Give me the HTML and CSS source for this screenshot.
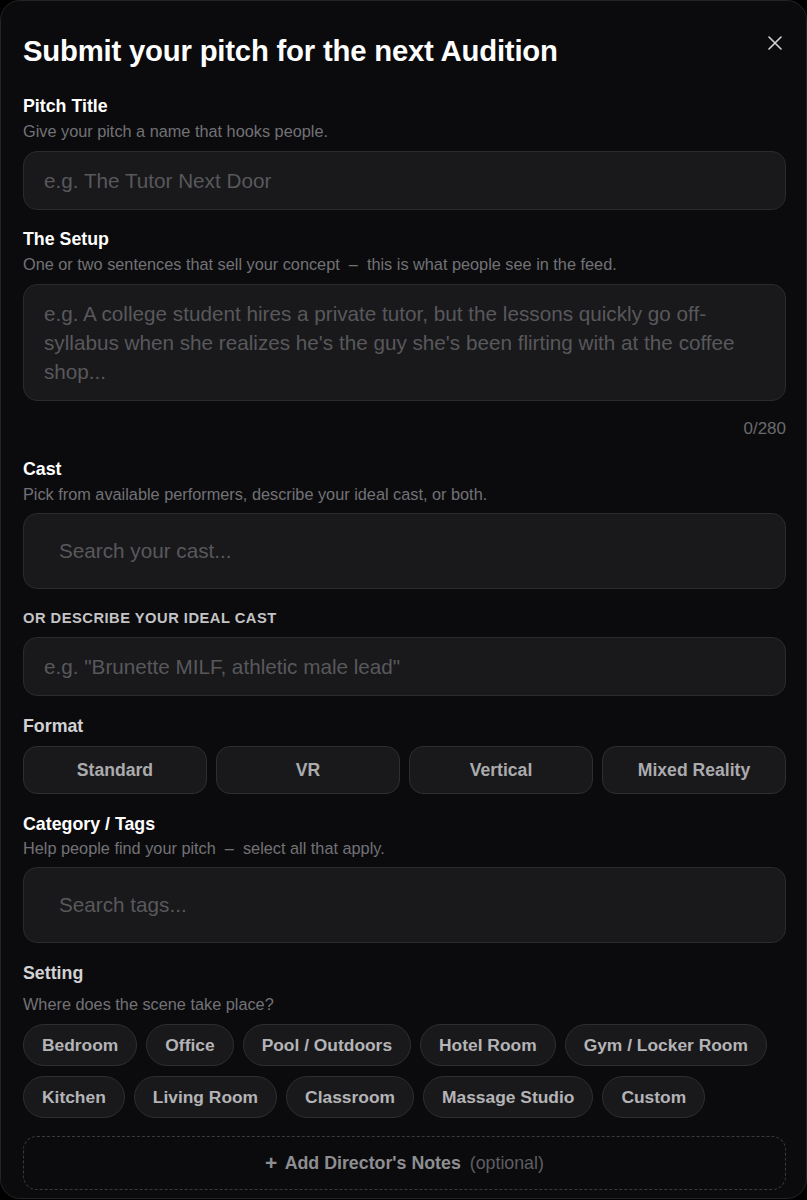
FILE: index.html
```html
<!DOCTYPE html>
<html lang="en">
<head>
<meta charset="utf-8">
<title>Submit your pitch</title>
<link rel="stylesheet" href="styles.css">
</head>
<body>
<div class="modal">
  <div class="header">
    <h1 class="title">Submit your pitch for the next Audition</h1>
    <button class="close" aria-label="Close">
      <svg width="14" height="14" viewBox="0 0 14 14"><path d="M1 1L13 13M13 1L1 13" stroke="#d4d4d4" stroke-width="1.6" stroke-linecap="round"/></svg>
    </button>
  </div>

  <section class="field f-title">
    <div class="label">Pitch Title</div>
    <div class="help">Give your pitch a name that hooks people.</div>
    <div class="input">e.g. The Tutor Next Door</div>
  </section>

  <section class="field f-setup">
    <div class="label">The Setup</div>
    <div class="help">One or two sentences that sell your concept&nbsp; –&nbsp; this is what people see in the feed.</div>
    <div class="input textarea">e.g. A college student hires a private tutor, but the lessons quickly go off-syllabus when she realizes he's the guy she's been flirting with at the coffee shop...</div>
    <div class="count">0/280</div>
  </section>

  <section class="field f-cast">
    <div class="label">Cast</div>
    <div class="help">Pick from available performers, describe your ideal cast, or both.</div>
    <div class="input search">Search your cast...</div>
    <div class="caps">OR DESCRIBE YOUR IDEAL CAST</div>
    <div class="input">e.g. "Brunette MILF, athletic male lead"</div>
  </section>

  <section class="field f-format">
    <div class="label dim">Format</div>
    <div class="formats">
      <div class="fbtn">Standard</div>
      <div class="fbtn">VR</div>
      <div class="fbtn">Vertical</div>
      <div class="fbtn">Mixed Reality</div>
    </div>
  </section>

  <section class="field f-tags">
    <div class="label">Category / Tags</div>
    <div class="help">Help people find your pitch&nbsp; –&nbsp; select all that apply.</div>
    <div class="input search">Search tags...</div>
  </section>

  <section class="field f-setting">
    <div class="label dim">Setting</div>
    <div class="help help-gap">Where does the scene take place?</div>
    <div class="chips">
      <div class="chip">Bedroom</div>
      <div class="chip">Office</div>
      <div class="chip">Pool / Outdoors</div>
      <div class="chip">Hotel Room</div>
      <div class="chip">Gym / Locker Room</div>
      <div class="chip">Kitchen</div>
      <div class="chip">Living Room</div>
      <div class="chip">Classroom</div>
      <div class="chip">Massage Studio</div>
      <div class="chip">Custom</div>
    </div>
  </section>

  <div class="notes"><span class="plus">+</span> Add Director's Notes <span class="opt">(optional)</span></div>
</div>
</body>
</html>
```

FILE: styles.css
```css
* { box-sizing: border-box; }
html, body {
  margin: 0;
  padding: 0;
  background: #000;
  font-family: "Liberation Sans", Arial, sans-serif;
  color: #fff;
}
.modal {
  width: 807px;
  min-height: 1199px;
  background: #0b0b0d;
  border: 1px solid #242426;
  border-radius: 20px;
  padding: 0 20px 0 22px;
  overflow: hidden;
}
.header {
  display: flex;
  justify-content: space-between;
  align-items: flex-start;
  padding-top: 31px;
}
.title {
  margin: 0;
  font-size: 29.3px;
  font-weight: 700;
  line-height: 38px;
  letter-spacing: -0.2px;
  color: #fff;
}
.close {
  background: none;
  border: 0;
  padding: 0;
  margin: 4px 4px 0 0;
  width: 14px;
  height: 14px;
  display: flex;
}
.field { display: flex; flex-direction: column; }
.label {
  font-size: 17.8px;
  font-weight: 700;
  line-height: 20px;
  color: #fff;
}
.label.dim { color: #d2d2d4; }
.help {
  font-size: 16.3px;
  line-height: 20px;
  color: #727276;
  margin-top: 5px;
}
.help-gap { margin-top: 11px; }
.input {
  margin-top: 10px;
  height: 59px;
  background: #19191b;
  border: 1px solid #2b2b2e;
  border-radius: 14px;
  padding: 0 20px;
  display: flex;
  align-items: center;
  font-size: 20.7px;
  color: #58585c;
}
.input.textarea {
  height: 117px;
  align-items: flex-start;
  padding-top: 14px;
  line-height: 29px;
  padding-right: 24px;
}
.input.search {
  height: 76px;
  padding-left: 35px;
}
.f-title { margin-top: 26px; }
.f-setup { margin-top: 19px; }
.f-setup .input { margin-top: 10px; }
.count {
  text-align: right;
  font-size: 17px;
  color: #6a6a6e;
  margin-top: 18px;
  line-height: 20px;
}
.f-cast { margin-top: 20px; }
.f-cast .help + .input { margin-top: 9px; }
.caps {
  margin-top: 19px;
  font-size: 14.7px;
  font-weight: 700;
  letter-spacing: 0.5px;
  line-height: 20px;
  color: #c4c4c6;
}
.f-cast .caps + .input { margin-top: 9px; }
.f-format { margin-top: 20px; }
.formats {
  margin-top: 10px;
  display: grid;
  grid-template-columns: repeat(4, 1fr);
  gap: 9px;
}
.fbtn {
  height: 48px;
  background: #19191b;
  border: 1px solid #2e2e31;
  border-radius: 14px;
  display: flex;
  align-items: center;
  justify-content: center;
  font-size: 17.6px;
  font-weight: 700;
  color: #ababae;
}
.f-tags { margin-top: 20px; }
.f-tags .help { margin-top: 4px; }
.f-tags .input { margin-top: 9px; }
.f-setting { margin-top: 20px; }
.chips {
  margin-top: 10px;
  display: flex;
  flex-wrap: wrap;
  gap: 10px 9px;
}
.chip {
  height: 42px;
  padding: 0 18px;
  background: #19191b;
  border: 1px solid #2e2e31;
  border-radius: 21px;
  display: flex;
  align-items: center;
  font-size: 17.4px;
  font-weight: 700;
  color: #b4b4b7;
}
.notes {
  margin-top: 18px;
  height: 54px;
  border: 1px dashed #3a3a3d;
  border-radius: 14px;
  display: flex;
  align-items: center;
  justify-content: center;
  font-size: 17.8px;
  font-weight: 700;
  color: #8e8e92;
  white-space: pre;
}
.plus { font-size: 21px; margin-right: 3px; }
.opt { font-weight: 400; color: #5e5e62; margin-left: 4px; }
```
